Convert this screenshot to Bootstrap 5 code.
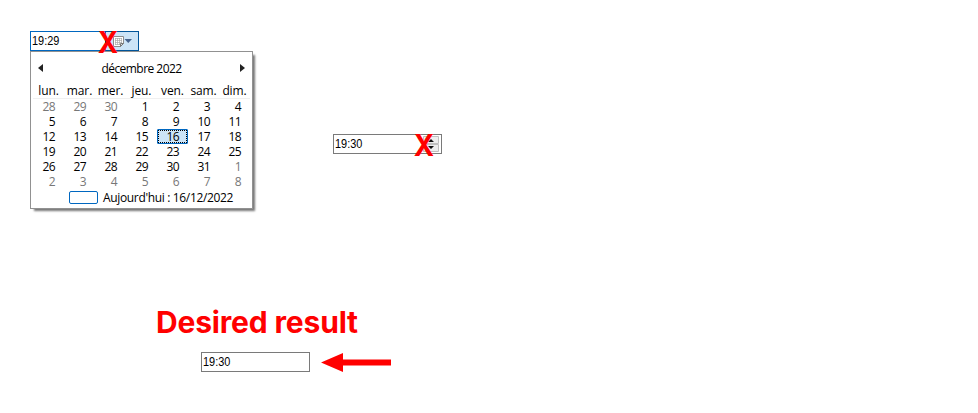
<!DOCTYPE html>
<html lang="fr">
<head>
<meta charset="utf-8">
<meta name="viewport" content="width=device-width, initial-scale=1">
<title>DateTimePicker</title>
<link rel="stylesheet" href="https://cdn.jsdelivr.net/npm/bootstrap@5.3.0/dist/css/bootstrap.min.css">
<style>
body{background:#fff;color:#000;font:12px/15px "Open Sans","Noto Sans",sans-serif;overflow:hidden}
.demo-top{padding:31px 0 0 30px;height:304px}
.time-box{width:109px;height:20px;border:1px solid #7a7a7a;background:#fff;font:12px/18px "Liberation Sans",sans-serif;padding-left:1px}
.time-box .value{display:inline-block;transform:scaleX(.91);transform-origin:left}
.time-box.active-box{border-color:#0067c0}
.drop-btn{width:34px;height:20px;margin:-1px;background:#cce4f7;border:1px solid #005499}
.spin-wrap{margin:103px 0 0 80px}
.spin{width:17px;height:16px;margin:1px}
.cross{left:var(--cx);top:-6px;width:20px;height:32px;color:#f00;font:700 30px/32px Inter,sans-serif;text-align:center}
.cross b{display:block;width:30px;margin-left:-5px;transform:scaleX(.92);font-weight:700}
.calendar{width:223px;height:158px;background:#fff;border:1px solid #919191;box-shadow:3px 3px 2px -1px #777;padding:0 2px}
.cal-title{height:31px;padding:2px 5px}
.cal-title svg{margin-top:10px}
.cal-title span{padding-top:7px;letter-spacing:-.54px}
.days{display:grid;grid-template-columns:repeat(7,31px);width:217px}
.days span{height:15px;line-height:15px;text-align:right;padding-right:9px;letter-spacing:-.55px}
.days .off{color:#777}
.days .dow{line-height:16px;padding:0;text-align:center;letter-spacing:-.1px;white-space:nowrap}
.names{border-bottom:1px solid #f0f0f0}
.days .chosen{background:#cce4f7;border:1px solid #0067c0;outline:1px dotted #000;outline-offset:-2px;border-radius:1px;padding-right:8px;line-height:13px}
.today-key{width:29px;height:13px;border:1px solid #0067c0;border-radius:2px;margin-left:36px;margin-right:5px}
.today-row{height:15px;margin-top:1px}
.today-text{letter-spacing:-.34px}
.result{padding-left:156px}
.result h1{height:37px;margin:0;color:#f00;font:700 30px/36px Inter,sans-serif;white-space:nowrap;letter-spacing:-.17px}
.result-row{padding:11px 0 0 45px;gap:11px}
</style>
<script src="https://cdn.jsdelivr.net/npm/bootstrap@5.3.0/dist/js/bootstrap.bundle.min.js"></script>
</head>
<body>
<main>
<section class="demo-top d-flex align-items-start">
 <div>
  <div class="time-box active-box d-flex justify-content-between position-relative">
   <span class="value">19:29</span>
   <div class="drop-btn">
    <svg width="32" height="18" viewBox="0 0 32 18" class="d-block"><path d="M7.500 4.500h10v7l-3 3h-7z" fill="#fff" stroke="#8c8c8c"/><path d="M9 6.500h7M9 8.500h7M9 10.500h7M9 12.500h5M9.500 6v7M11.500 6v7M13.500 6v7M15.500 6v5" stroke="#aaa" stroke-width=".7"/><path d="M17.500 11.500h-3v3z" fill="#ddd" stroke="#777"/><path d="M18.500 7h7.500l-3.750 4z" fill="#45628c"/></svg>
   </div>
   <span class="cross position-absolute" style="--cx:67px"><b>X</b></span>
  </div>
  <div class="calendar">
   <div class="cal-title d-flex justify-content-between align-items-start">
    <svg width="5" height="8"><path d="M5 0v8L0 4z" fill="#222"/></svg>
    <span>décembre 2022</span>
    <svg width="5" height="8"><path d="M0 0v8l5-4z" fill="#222"/></svg>
   </div>
   <div class="days names"><span class="dow">lun.</span><span class="dow">mar.</span><span class="dow">mer.</span><span class="dow">jeu.</span><span class="dow">ven.</span><span class="dow">sam.</span><span class="dow">dim.</span></div>
   <div class="days">
    <span class="off">28</span><span class="off">29</span><span class="off">30</span><span>1</span><span>2</span><span>3</span><span>4</span>
    <span>5</span><span>6</span><span>7</span><span>8</span><span>9</span><span>10</span><span>11</span>
    <span>12</span><span>13</span><span>14</span><span>15</span><span class="chosen">16</span><span>17</span><span>18</span>
    <span>19</span><span>20</span><span>21</span><span>22</span><span>23</span><span>24</span><span>25</span>
    <span>26</span><span>27</span><span>28</span><span>29</span><span>30</span><span>31</span><span class="off">1</span>
    <span class="off">2</span><span class="off">3</span><span class="off">4</span><span class="off">5</span><span class="off">6</span><span class="off">7</span><span class="off">8</span>
   </div>
   <div class="today-row d-flex align-items-center"><span class="today-key"></span><span class="today-text">Aujourd'hui : 16/12/2022</span></div>
  </div>
 </div>
 <div class="spin-wrap">
  <div class="time-box d-flex justify-content-between position-relative">
   <span class="value">19:30</span>
   <svg class="spin" viewBox="0 0 17 16"><path d="M.5.500h15v7H.5zM.5 8.500h15v7H.5z" fill="#eee" stroke="#c0c0c0"/><path d="M5 6h6L8 3zM5 10h6l-3 3z" fill="#111"/></svg>
   <span class="cross position-absolute" style="--cx:80px"><b>X</b></span>
  </div>
 </div>
</section>
<section class="result">
 <h1>Desired result</h1>
 <div class="result-row d-flex align-items-center">
  <div class="time-box"><span class="value">19:30</span></div>
  <svg width="70" height="20" viewBox="0 0 70 20"><path d="M0 10.500 22 1v6.500h48v6H22V20z" fill="red"/></svg>
 </div>
</section>
</main>
</body>
</html>
